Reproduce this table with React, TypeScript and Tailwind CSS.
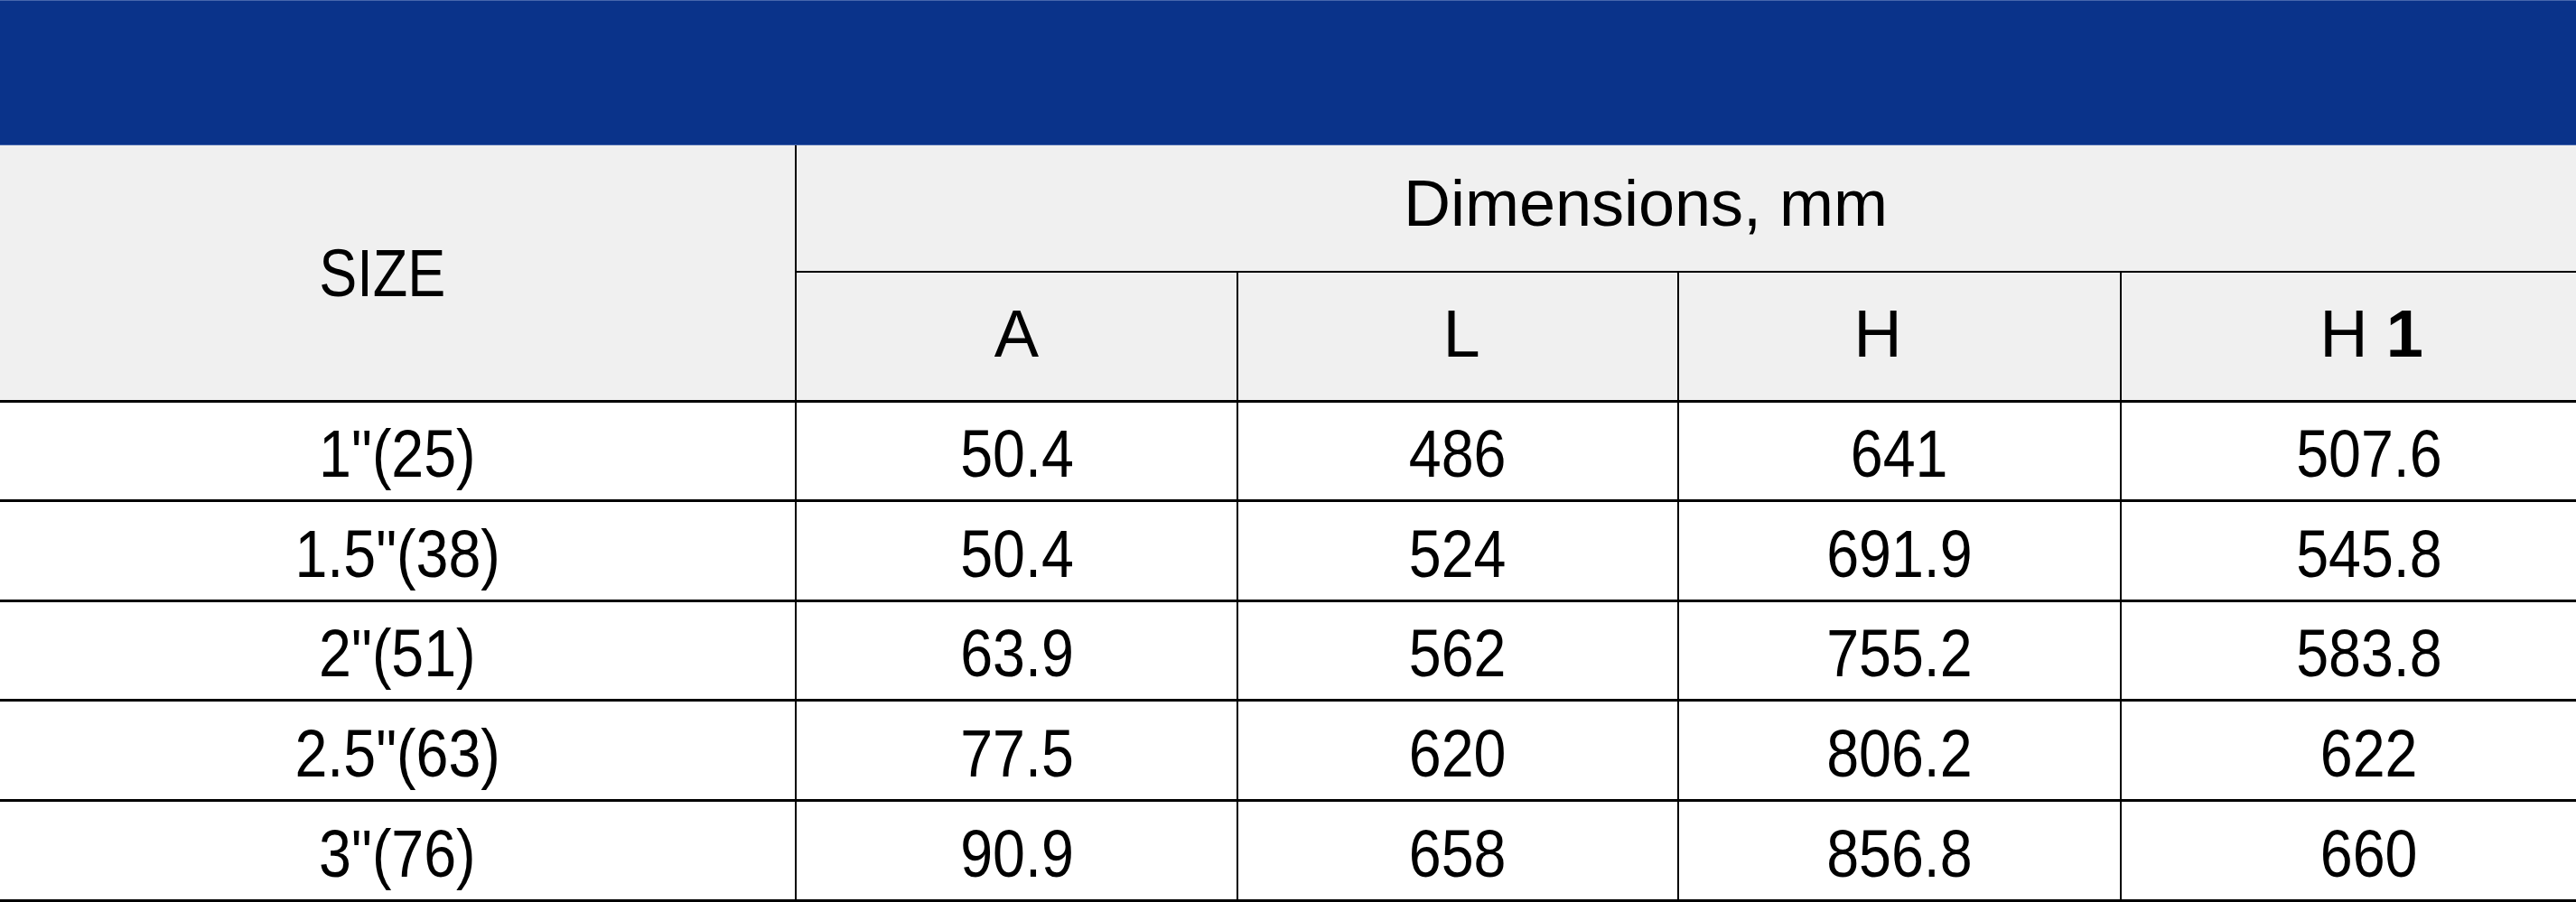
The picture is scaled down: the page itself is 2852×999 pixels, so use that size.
import React from "react";

const rows = [
  ["1\"(25)", "50.4", "486", "641", "507.6"],
  ["1.5\"(38)", "50.4", "524", "691.9", "545.8"],
  ["2\"(51)", "63.9", "562", "755.2", "583.8"],
  ["2.5\"(63)", "77.5", "620", "806.2", "622"],
  ["3\"(76)", "90.9", "658", "856.8", "660"],
];

const narrow = "font-['Liberation_Sans',Arial,sans-serif]";
const plain = "font-['Liberation_Sans',Arial,sans-serif]";

export default function App() {
  return (
    <div className="w-[2852px] h-[999px] bg-white text-black overflow-hidden">
      <div className="h-[161px] bg-[#0a338a] border-t border-b border-[#4767ad]" />
      <div className="grid grid-cols-[880px_489px_488px_490px_505px] grid-rows-[141px_144px_110px_111px_110px_111px_111px]">
        <div className={`row-span-2 bg-[#f0f0f0] border-b-[3px] border-black flex items-center justify-center pr-[34px] text-[75px] leading-none ${narrow}`}>
          <span className="inline-block scale-x-[0.84]">SIZE</span>
        </div>
        <div className={`col-span-4 bg-[#f0f0f0] border-l-2 border-b-2 border-black flex items-center justify-center pb-[12px] text-[72px] leading-none ${plain}`}>
          <span className="mr-[90px]">Dimensions, mm</span>
        </div>
        <div className={`bg-[#f0f0f0] border-l-2 border-b-[3px] border-black flex items-center justify-center pb-[6px] text-[74px] leading-none ${plain}`}>
          A
        </div>
        <div className={`bg-[#f0f0f0] border-l-2 border-b-[3px] border-black flex items-center justify-center pb-[6px] pl-[8px] text-[74px] leading-none ${plain}`}>
          L
        </div>
        <div className={`bg-[#f0f0f0] border-l-2 border-b-[3px] border-black flex items-center justify-center pb-[6px] pr-[48px] text-[74px] leading-none ${plain}`}>
          H
        </div>
        <div className={`bg-[#f0f0f0] border-l-2 border-b-[3px] border-black flex items-center justify-center pb-[6px] pl-[50px] text-[74px] leading-none ${plain}`}>
          <span>H</span>
          <span className="ml-[20px] font-bold">1</span>
        </div>
        {rows.map((r, i) =>
          r.map((c, j) => (
            <div
              key={`${i}-${j}`}
              className={`${j > 0 ? "border-l-2" : ""} ${j === 4 ? "pl-[44px]" : ""} border-b-[3px] border-black flex items-center justify-center pt-[6px] text-[75px] leading-none ${narrow}`}
            >
              <span className="inline-block scale-x-[0.86]">{c}</span>
            </div>
          ))
        )}
      </div>
    </div>
  );
}
